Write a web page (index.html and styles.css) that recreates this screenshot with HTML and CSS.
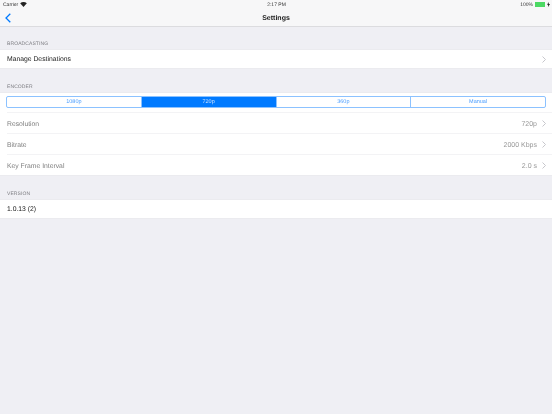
FILE: index.html
```html
<!DOCTYPE html>
<html lang="en">

<head>
    <meta charset="UTF-8">
    <meta name="viewport" content="width=device-width, initial-scale=1.0">
    <title>Settings</title>
    <link rel="stylesheet" href="styles.css">
</head>

<body>
    <header class="navBar">
        <div class="statusBar">
            <div class="statusLeft">
                <span>Carrier</span>
                <svg class="wifi" width="7" height="5" viewBox="0 0 8 6"><path d="M4 6 0 1.600C2.300-.5 5.700-.5 8 1.600z" fill="#222"/></svg>
            </div>
            <div class="statusTime">2:17 PM</div>
            <div class="statusRight">
                <span>100%</span>
                <span class="battery"><span class="batteryFill"></span></span>
                <svg width="3" height="5" viewBox="0 0 3 5"><path d="M1.800 0 0 2.800h1.200L1 5l2-3H1.700z" fill="#222"/></svg>
            </div>
        </div>
        <div class="titleBar">
            <svg class="backIcon" width="6" height="10" viewBox="0 0 6 10"><path d="M5.300.7 1 5l4.300 4.300" fill="none" stroke="#007aff" stroke-width="1.300"/></svg>
            <h1 class="title">Settings</h1>
        </div>
    </header>

    <main>
        <h2 class="sectionLabel">BROADCASTING</h2>
        <div class="group">
            <div class="row">
                <span class="rowName">Manage Destinations</span>
                <svg class="chevron" width="4" height="7" viewBox="0 0 4 7"><path d="m.5.5 3 3-3 3" fill="none" stroke="#c7c7cc"/></svg>
            </div>
        </div>

        <h2 class="sectionLabel">ENCODER</h2>
        <div class="group">
            <div class="segmentRow">
                <div class="segments">
                    <div class="segment">1080p</div>
                    <div class="segment active">720p</div>
                    <div class="segment">360p</div>
                    <div class="segment">Manual</div>
                </div>
            </div>
            <div class="row dim">
                <span class="rowName">Resolution</span>
                <span class="rowValue">720p</span>
                <svg class="chevron" width="4" height="7" viewBox="0 0 4 7"><path d="m.5.5 3 3-3 3" fill="none" stroke="#c7c7cc"/></svg>
            </div>
            <div class="row dim">
                <span class="rowName">Bitrate</span>
                <span class="rowValue">2000 Kbps</span>
                <svg class="chevron" width="4" height="7" viewBox="0 0 4 7"><path d="m.5.5 3 3-3 3" fill="none" stroke="#c7c7cc"/></svg>
            </div>
            <div class="row dim">
                <span class="rowName">Key Frame Interval</span>
                <span class="rowValue">2.0 s</span>
                <svg class="chevron" width="4" height="7" viewBox="0 0 4 7"><path d="m.5.5 3 3-3 3" fill="none" stroke="#c7c7cc"/></svg>
            </div>
        </div>

        <h2 class="sectionLabel">VERSION</h2>
        <div class="group">
            <div class="row">
                <span class="rowName">1.0.13 (2)</span>
            </div>
        </div>
    </main>
</body>

</html>
```

FILE: styles.css
```css
* {
    box-sizing: border-box;
}

body {
    margin: 0;
    min-height: 414px;
    background-color: #efeff4;
    font-family: "Liberation Sans", Arial, sans-serif;
    color: #222;
    overflow: hidden;
    text-rendering: geometricPrecision;
}

.navBar {
    height: 27px;
    background-color: #f7f7f8;
    border-bottom: 1px solid #dcdcdf;
    will-change: transform;
}

main {
    will-change: transform;
}

.statusBar {
    display: grid;
    grid-template-columns: 1fr auto 1fr;
    align-items: center;
    height: 9px;
    padding: 0 2px 0 3px;
    font-size: 5px;
    color: #333;
}

.statusLeft {
    display: flex;
    align-items: center;
    gap: 2px;
}

.statusRight {
    display: flex;
    align-items: center;
    justify-content: flex-end;
    gap: 2px;
}

.battery {
    display: block;
    width: 10px;
    height: 5px;
    background-color: #4cd964;
}

.titleBar {
    position: relative;
    display: flex;
    align-items: center;
    justify-content: center;
    height: 17px;
    padding-top: 1px;
}

.backIcon {
    position: absolute;
    left: 5px;
    top: 4px;
}

.title {
    margin: 0;
    font-size: 7px;
    font-weight: 700;
}

.sectionLabel {
    margin: 0;
    height: 22px;
    padding: 14px 7px 0;
    font-size: 5px;
    line-height: 6px;
    font-weight: 400;
    letter-spacing: 0.1px;
    color: #7d7d82;
}

.group {
    margin-bottom: 1px;
    background-color: #fff;
    border-top: 1px solid #ebebef;
    border-bottom: 1px solid #ebebef;
}

.row {
    display: flex;
    align-items: center;
    height: 18px;
    margin-left: 7px;
    padding-top: 1px;
    padding-right: 6px;
    font-size: 6.800px;
}

.dim {
    height: 21px;
    padding-top: 2px;
    border-top: 1px solid #f3f3f5;
    color: #808080;
}

.rowName {
    flex: 1;
}

.rowValue {
    margin-right: 5px;
    color: #999;
    font-size: 7px;
}

.chevron {
    margin-top: -1px;
}

.segmentRow {
    height: 19px;
    padding: 3px 6px;
}

.segments {
    display: flex;
    height: 12px;
    border: 1px solid #8cc2ff;
    border-radius: 2px;
    overflow: hidden;
}

.segment {
    flex: 1;
    border-left: 1px solid #8cc2ff;
    font-size: 5.500px;
    line-height: 10px;
    text-align: center;
    color: #4a9dff;
}

.segment:first-child {
    border-left: 0;
}

.active {
    background-color: #007aff;
    color: #cfe4ff;
}
```
